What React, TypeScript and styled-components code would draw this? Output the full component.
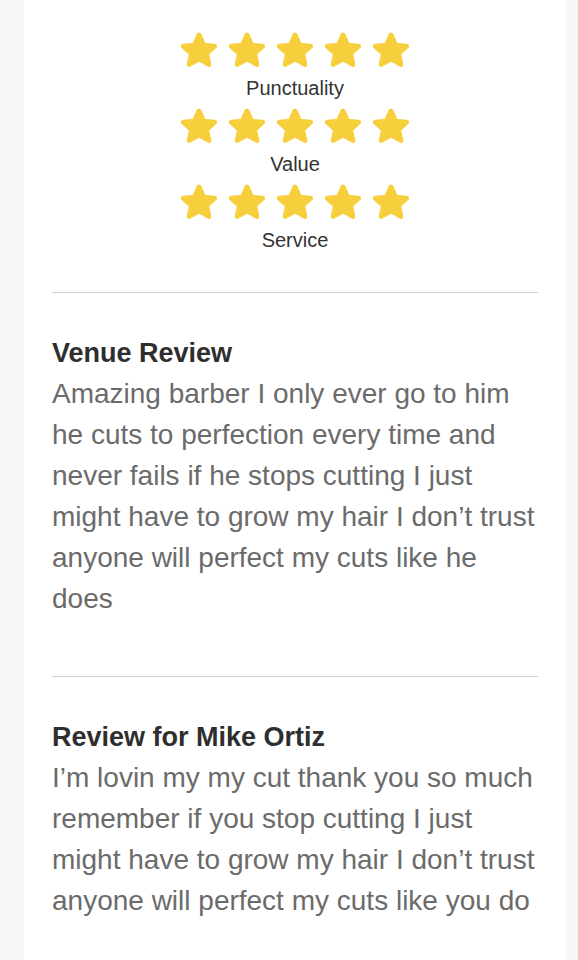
import React from "react";
import styled, { createGlobalStyle } from "styled-components";

const ratings = ["Punctuality", "Value", "Service"];

const reviews = [
  {
    title: "Venue Review",
    text: "Amazing barber I only ever go to him he cuts to perfection every time and never fails if he stops cutting I just might have to grow my hair I don\u2019t trust anyone will perfect my cuts like he does",
  },
  {
    title: "Review for Mike Ortiz",
    text: "I\u2019m lovin my my cut thank you so much remember if you stop cutting I just might have to grow my hair I don\u2019t trust anyone will perfect my cuts like you do",
  },
];

const Star: React.FC = () => (
  <StarIcon viewBox="0 0 38 36" aria-hidden="true">
    <polygon
      points="19,3 23.7,13.2 34.6,14.2 26.4,21.6 28.8,32.4 19,26.8 9.2,32.4 11.6,21.6 3.4,14.2 14.3,13.2"
      fill="#f6cf3c"
      stroke="#f6cf3c"
      strokeWidth="5"
      strokeLinejoin="round"
    />
  </StarIcon>
);

const App: React.FC = () => {
  return (
    <>
      <GlobalStyle />
      <Card>
        <Ratings>
          {ratings.map((label) => (
            <RatingBlock key={label}>
              <StarRow>
                {[0, 1, 2, 3, 4].map((i) => (
                  <Star key={i} />
                ))}
              </StarRow>
              <RatingLabel>{label}</RatingLabel>
            </RatingBlock>
          ))}
        </Ratings>
        {reviews.map((review) => (
          <Review key={review.title}>
            <ReviewTitle>{review.title}</ReviewTitle>
            <ReviewText>{review.text}</ReviewText>
          </Review>
        ))}
      </Card>
    </>
  );
};

const GlobalStyle = createGlobalStyle`
  body {
    margin: 0;
    background: #f7f7f7;
    font-family: "Liberation Sans", Arial, Helvetica, sans-serif;
  }
`;

const Card = styled.div`
  width: 542px;
  min-height: 960px;
  margin-left: 24px;
  padding: 32px 28px 0;
  box-sizing: border-box;
  background: #ffffff;
`;

const Ratings = styled.div`
  display: flex;
  flex-direction: column;
  align-items: center;
  padding-bottom: 32px;
`;

const RatingBlock = styled.div`
  display: flex;
  flex-direction: column;
  align-items: center;
`;

const StarRow = styled.div`
  display: flex;
  gap: 10px;
  height: 36px;
`;

const StarIcon = styled.svg`
  width: 38px;
  height: 36px;
  display: block;
`;

const RatingLabel = styled.div`
  font-size: 20px;
  line-height: 40px;
  color: #333333;
`;

const Review = styled.section`
  border-top: 1px solid #cfcfcf;
  padding: 44px 0 57px;
`;

const ReviewTitle = styled.h3`
  margin: 0 0 4px;
  font-size: 27px;
  line-height: 32px;
  font-weight: 700;
  color: #2e2e2e;
`;

const ReviewText = styled.p`
  margin: 0 -1px 0 0;
  font-size: 28px;
  line-height: 41px;
  color: #6b6b6b;
`;

export default App;
